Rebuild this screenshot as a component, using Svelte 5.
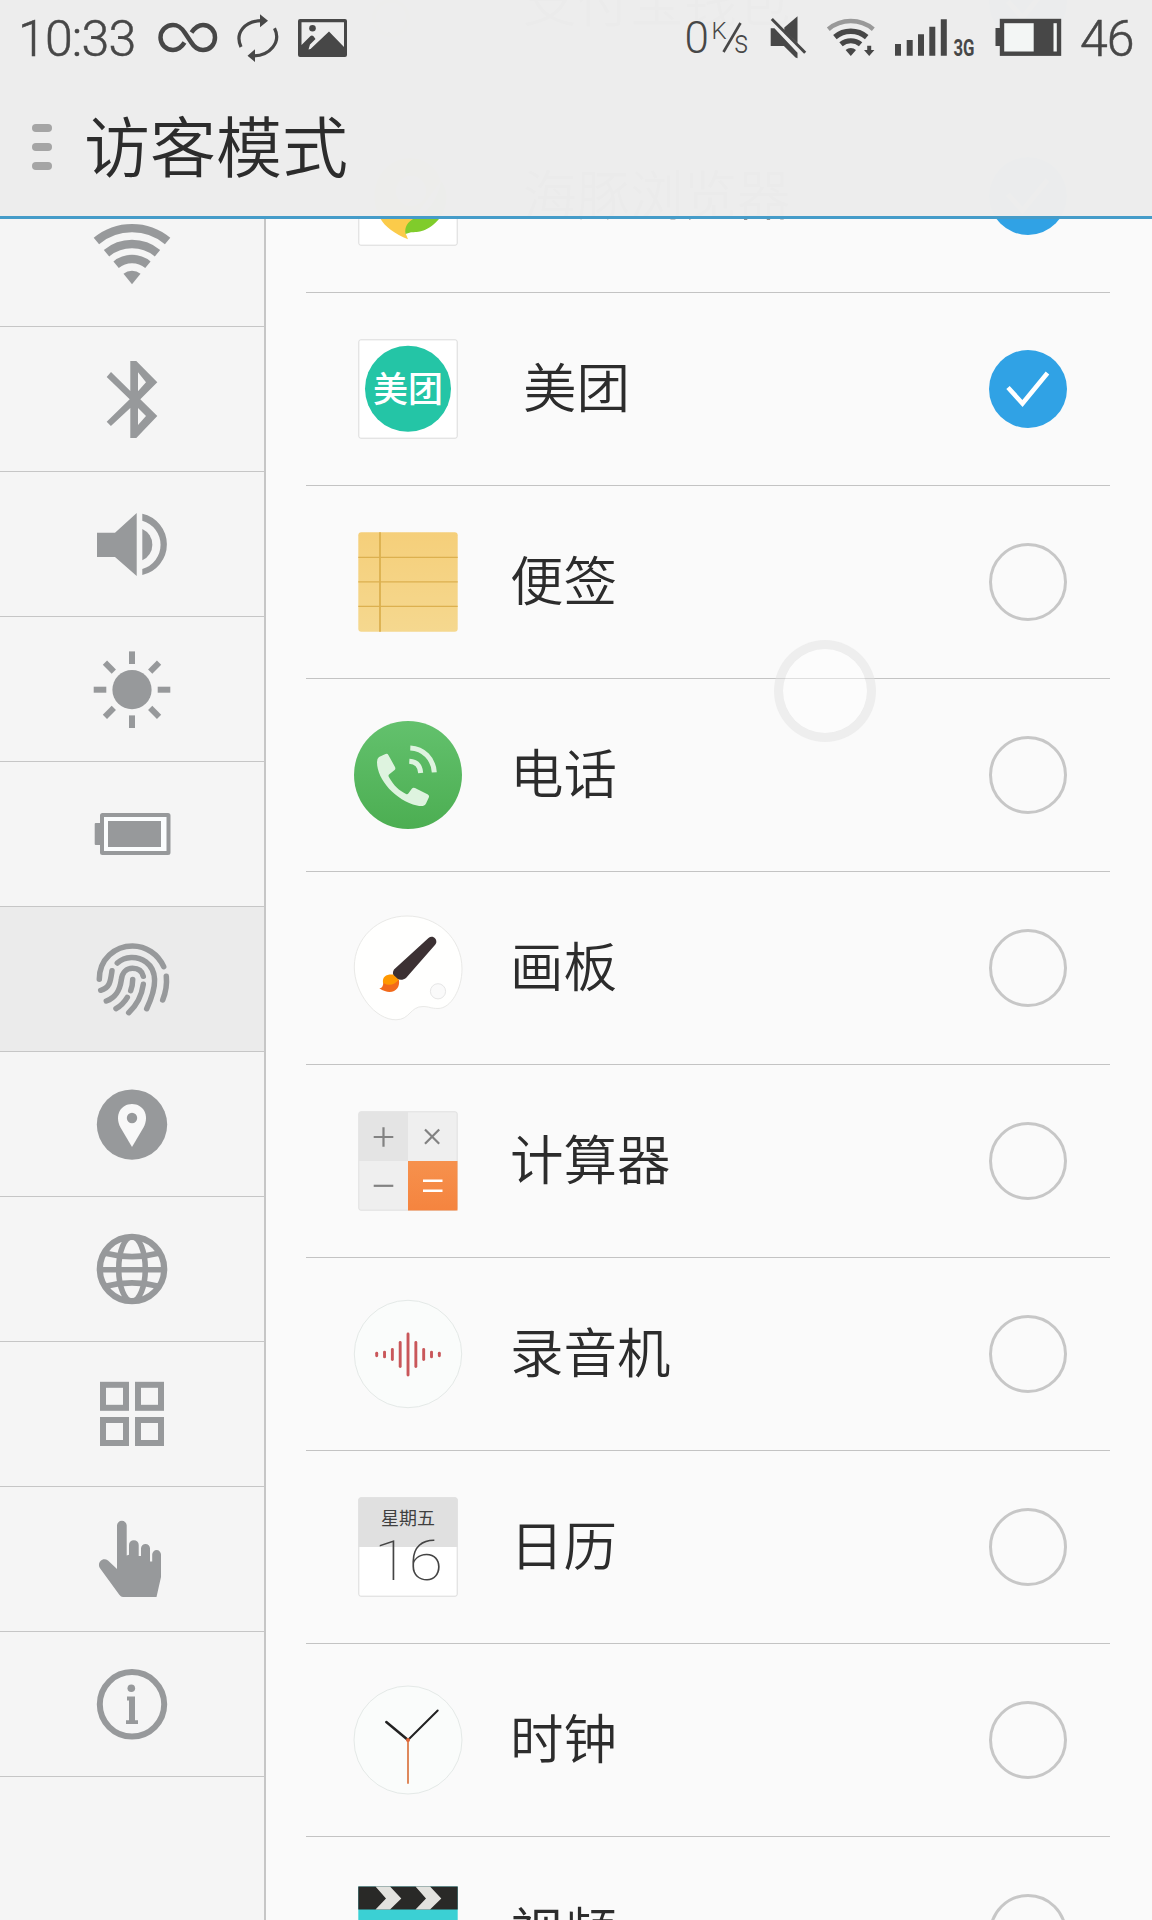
<script lang="ts">
  interface App {
    id: string
    name: string
    checked: boolean
    indent?: boolean
  }

  let apps: App[] = $state([
    { id: 'alipay', name: '支付宝钱包', checked: true, indent: true },
    { id: 'dolphin', name: '海豚浏览器', checked: true, indent: true },
    { id: 'meituan', name: '美团', checked: true, indent: true },
    { id: 'notes', name: '便签', checked: false },
    { id: 'phone', name: '电话', checked: false },
    { id: 'paint', name: '画板', checked: false },
    { id: 'calculator', name: '计算器', checked: false },
    { id: 'recorder', name: '录音机', checked: false },
    { id: 'calendar', name: '日历', checked: false },
    { id: 'clock', name: '时钟', checked: false },
    { id: 'video', name: '视频', checked: false },
  ])

  const sections = [
    'wifi',
    'bluetooth',
    'sound',
    'display',
    'battery',
    'fingerprint',
    'location',
    'globe',
    'apps',
    'gesture',
    'info',
  ]

  let active = $state('fingerprint')

  const rays = [0, 45, 90, 135, 180, 225, 270, 315]

  // half heights of the recorder bars, left to right
  const wave = [1.2, 2.4, 5, 12, 20.5, 12, 5, 2.4, 1.2]
</script>

{#snippet sectionIcon(id: string)}
  <svg class="section-icon" viewBox="0 0 80 80">
    {#if id === 'wifi'}
      <g fill="none" stroke="#97999b" stroke-width="8.4">
        <path d="M4.4 27A55.8 55.8 0 0 1 75.6 27" />
        <path d="M14.5 39.2A40 40 0 0 1 65.5 39.2" />
        <path d="M24.1 50.7A25 25 0 0 1 55.9 50.7" />
      </g>
      <path d="M40 70.3L31.5 59.8A13.3 13.3 0 0 1 48.5 59.8Z" />
    {:else if id === 'bluetooth'}
      <path
        fill-rule="evenodd"
        d="M38.3 2H44.3L65.3 23.3L48.3 40.3L65.3 57L44.3 79H38.3V49L18.9 67L14.7 62.7L37.7 40.3L14.7 18L19 13L38.3 32ZM46 13.3V32.3L54 23.3ZM46 49V66L54 57Z"
      />
    {:else if id === 'sound'}
      <path d="M5 28.7H23L44.7 9V72L23 53H5Z" />
      <path d="M50.3 25A17.2 17.2 0 0 1 50.3 56.3Z" />
      <path d="M50.3 9.7A31.4 31.4 0 0 1 50.3 71V65A25.1 25.1 0 0 0 50.3 16.7Z" />
    {:else if id === 'display'}
      <circle cx="40" cy="40.7" r="19.6" />
      {#each rays as angle}
        <rect x="37" y="2.4" width="6" height="12.6" transform="rotate({angle} 40 40.7)" />
      {/each}
    {:else if id === 'battery'}
      <rect x="2.7" y="29" width="8" height="22" rx="1" />
      <rect x="10" y="21" width="66.5" height="38" rx="0.5" fill="#fbfdfe" stroke="#97999b" stroke-width="4" />
      <rect x="16" y="27" width="53" height="26" />
    {:else if id === 'fingerprint'}
      <g fill="none" stroke="#97999b" stroke-width="5.5" stroke-linecap="round">
        <path d="M7.3 40.3C7.3 20 23 7 40.5 7C54 7 66 15 71.7 27.7" />
        <path d="M74.3 37.3Q75.5 49 70.7 61" />
        <path d="M25.3 24C33 17 45 16.5 54 23C66 32 65 48 54.7 69.7" />
        <path d="M20 31.7C18.5 42 18 49 8.7 51.3" />
        <path d="M14.3 62C25 58 28 50 29.3 41C30 33 35 29.3 40.5 29.3C46 29.3 50 32 51.3 37.3" />
        <path d="M40.7 40.5Q40.7 46 38.7 51.7" />
        <path d="M35.3 58.3Q31 65.5 24 69.7" />
        <path d="M51.3 45.3Q49 62 36.7 73.7" />
      </g>
    {:else if id === 'location'}
      <circle cx="40" cy="40.6" r="35.2" />
      <path fill="#f8f8f8" d="M40 63L28.5 43.5C22 31 29 20 40 20S58 31 51.5 43.5Z" />
      <circle cx="40" cy="34" r="5.2" />
    {:else if id === 'globe'}
      <g fill="none" stroke="#97999b" stroke-width="5.6">
        <circle cx="40" cy="40" r="32.2" stroke-width="6.2" />
        <ellipse cx="40" cy="40" rx="13.3" ry="32.2" />
        <path d="M8 40.7H72" />
        <path d="M13.5 24.2Q40 31 66.5 24.2" />
        <path d="M13.5 57.2Q40 50.6 66.5 57.2" />
      </g>
    {:else if id === 'apps'}
      <g fill="none" stroke="#97999b" stroke-width="6">
        <rect x="11" y="10.8" width="23" height="23" />
        <rect x="46" y="10.8" width="23" height="23" />
        <rect x="11" y="46" width="23" height="23" />
        <rect x="46" y="46" width="23" height="23" />
      </g>
    {:else if id === 'gesture'}
      <path
        d="M25 50V6.6A4.8 4.8 0 0 1 34.7 6.6V36.5L37 35.8V26A4.8 4.8 0 0 1 46.7 26V37H49V29.5A4.5 4.5 0 0 1 58 29.5V42.5H60.2V35.5A4.4 4.4 0 0 1 69 35.5V58L64.5 78H31Q29 78 27.3 75.8L8 49.3C4.5 44 10.5 37.5 16 41.5Z"
      />
    {:else}
      <circle cx="40" cy="40.3" r="32.2" fill="none" stroke="#97999b" stroke-width="6" />
      <circle cx="39.3" cy="24.3" r="3.8" />
      <path d="M35 32.5H43V56.2H46V60H34V56.2H37V36.5H35Z" />
    {/if}
  </svg>
{/snippet}

{#snippet appIcon(id: string)}
  <svg class="app-icon" viewBox="0 0 110 110">
    {#if id === 'alipay'}
      <rect x="5.8" y="5.8" width="98.4" height="98.4" rx="2" fill="#fff" stroke="#dadada" />
      <circle cx="38" cy="70" r="17" fill="none" stroke="#f3c980" stroke-width="4" />
    {:else if id === 'dolphin'}
      <rect x="5.8" y="5.8" width="98.4" height="98.4" rx="2" fill="#fff" stroke="#dadada" />
      <path fill="#fbcb4a" d="M55 98.3C42 93 32 86 27 77C12 50 28 18 56 17C72 17 84 26 88 40L62 76L52.5 92Z" />
      <path fill="#80cc2b" d="M52.5 93C51.5 86 54 81 62 77C74 72 84 60 88 40C98 52 93 70 86 78C75 91 65 91 58 91.3Z" />
      <circle cx="58" cy="50" r="15" fill="#fff" />
    {:else if id === 'meituan'}
      <rect x="5.8" y="5.8" width="98.4" height="98.4" rx="2" fill="#fff" stroke="#dadada" />
      <circle cx="55" cy="54.8" r="43" fill="#24c5a6" />
      <text x="20" y="67.6" font-size="35" font-weight="500" fill="#fff" textLength="70">美团</text>
    {:else if id === 'notes'}
      <defs>
        <linearGradient id="paper" x1="0" y1="0" x2="0" y2="1">
          <stop offset="0" stop-color="#f5cf7a" />
          <stop offset="1" stop-color="#f5d88f" />
        </linearGradient>
      </defs>
      <rect x="5.3" y="5.3" width="99.4" height="99.4" rx="3" fill="url(#paper)" />
      <g stroke="#dcb04f">
        <path d="M5.3 30.4H104.7M5.3 54.9H104.7M5.3 79.4H104.7" stroke-width="1.2" />
        <path d="M27 5.3V104.7" stroke-width="1.8" />
      </g>
    {:else if id === 'phone'}
      <defs>
        <linearGradient id="call" x1="0" y1="0" x2="0" y2="1">
          <stop offset="0" stop-color="#63c16d" />
          <stop offset="1" stop-color="#4cae52" />
        </linearGradient>
      </defs>
      <circle cx="55" cy="55" r="54" fill="url(#call)" />
      <path
        fill="#def3df"
        d="M26 37L32.5 34Q34.5 33.3 35.5 35.2L42 47Q43 49 41.3 50.3L36 54.5Q35 55.6 36 57.3C41 66 46 70.5 53 74Q54.5 74.7 55.3 73.5L58.8 68.7Q60 67 62 68L74.5 74.2Q76.7 75.3 75.8 77.5L73 83.5C71.5 86.5 68 86.5 64 85.5C43 80.5 24 60 24 42Q24 38.5 26 37Z"
      />
      <g fill="none" stroke="#def3df" stroke-width="5">
        <path d="M57.3 28C70.5 28.5 80.5 39 81.3 52.3" />
        <path d="M56.3 41.3Q67 42 67.7 53" />
      </g>
    {:else if id === 'paint'}
      <path
        fill="#fffffe"
        stroke="#e9e9e7"
        d="M54 3C25 3 1.3 25 1.3 54C1.3 80 22 106.8 43 106.8C57 106.8 57 93.5 70 93.5C76 93.5 78 95.5 85 95.5C98 95.5 109 76 109 56C109 25 84 3 54 3Z"
      />
      <circle cx="85" cy="78.3" r="7.6" fill="#fafafa" stroke="#e6e6e6" />
      <path
        fill="#3c3133"
        d="M75.5 25C79 21.8 84 25 83.3 29.5Q83 31 81.5 32.5L53 65C47 70 36.5 63.5 41 56.5Z"
      />
      <path fill="#ff9800" d="M30 70C29 63 34 61 40 61.5L46 67L44 73L34 75Z" />
      <path fill="#f26a1b" d="M26.3 75.3Q30 75.3 30.3 70Q39 75 45.8 66.5C48 76 39 84 26.3 75.3Z" />
    {:else if id === 'calculator'}
      <defs>
        <linearGradient id="equals" x1="0" y1="0" x2="0" y2="1">
          <stop offset="0" stop-color="#f6914d" />
          <stop offset="1" stop-color="#f5843f" />
        </linearGradient>
      </defs>
      <rect x="5.8" y="5.8" width="98.4" height="98.4" rx="2" fill="#efefef" stroke="#dfdfdf" />
      <path fill="#e4e4e4" d="M6 6H55V55H6Z" />
      <path fill="url(#equals)" d="M55 55H104.5V104.5H55Z" />
      <g fill="none" stroke="#828282" stroke-width="2.2">
        <path d="M20.7 31H40.3M30.5 21.2V40.8" />
        <path d="M72 23.5L86.2 37.7M86.2 23.5L72 37.7" />
        <path d="M20.7 79.8H40.3" />
        <path stroke="#fff" stroke-width="2.6" d="M70 74.7H89.5M70 84.7H89.5" />
      </g>
    {:else if id === 'recorder'}
      <circle cx="55" cy="55" r="53.7" fill="#fafcfb" stroke="#e4e9e7" />
      <g stroke="#c9575a" stroke-width="2.9" stroke-linecap="round">
        {#each wave as half, i}
          <path d="M{23.7 + i * 7.83} {55.5 - half}V{55.5 + half}" />
        {/each}
      </g>
    {:else if id === 'calendar'}
      <rect x="5.8" y="5.8" width="98.4" height="98.4" rx="2" fill="#fff" stroke="#dadada" />
      <path fill="#e0e0e0" d="M5.5 8Q5.5 5.5 8 5.5H102Q104.5 5.5 104.5 8V55H5.5Z" />
      <text x="55" y="33" font-size="18" fill="#404040" text-anchor="middle">星期五</text>
      <text class="day" x="21" y="88" font-size="56" fill="#444" textLength="69" lengthAdjust="spacingAndGlyphs">16</text>
    {:else if id === 'clock'}
      <circle cx="55" cy="55" r="54" fill="#fafcfb" stroke="#e4e9e7" />
      <g fill="none" stroke-linecap="round">
        <path stroke="#222" stroke-width="2.5" d="M55 55L33.3 37" />
        <path stroke="#222" stroke-width="2" d="M55 55L84.7 25.5" />
        <path stroke="#dd8354" stroke-width="1.9" d="M55 55V98" />
      </g>
      <circle cx="55" cy="55" r="2" fill="#e0683c" />
    {:else}
      <path fill="#3bd0d4" d="M5.3 8.5H104.7V105H5.3Z" />
      <path fill="#292927" d="M5.3 8.5H104.7V31.4H5.3Z" />
      <g fill="#e2e2de">
        <path d="M22.5 8.5H37L48.3 20.4L37 31.4H22.5L33 20.4Z" />
        <path d="M62.5 8.5H77L88.3 20.4L77 31.4H62.5L73 20.4Z" />
      </g>
    {/if}
  </svg>
{/snippet}

<div class="screen">
  <header class="header">
    <div class="status-bar">
      <span class="clock">10:33</span>
      <svg class="infinity" viewBox="0 0 60 32">
        <path
          d="M26.5 20.5C23 26 19 28 15 28C8 28 2.5 22.5 2.5 15.5C2.5 8.5 8 3 15 3C20 3 23 5 27 11L33 20C36 25 39 28 45 28C52 28 57 22.5 57 15.5C57 8.5 52 3 45 3C40 3 37 5.5 33.5 10.5"
          fill="none"
          stroke="#474747"
          stroke-width="4.5"
        />
      </svg>
      <svg class="sync" viewBox="0 0 44 50">
        <g fill="none" stroke="#474747" stroke-width="3.2">
          <path d="M5 34C-1.5 20 9 7.7 26 7.7" />
          <path d="M38.5 15.3C45.5 29 34 42.8 17 42.8" />
        </g>
        <path d="M24 1.3L32 7.7L24 14.2ZM19 36.3L11.5 42.8L19 49Z" />
      </svg>
      <svg class="picture" viewBox="0 0 49 38">
        <path
          fill-rule="evenodd"
          d="M2 0H47Q49 0 49 2V36Q49 38 47 38H2Q0 38 0 36V2Q0 0 2 0ZM3.5 3.3V26L12.5 17Q14 15.8 15.5 17.3L17.5 20L12 25.5L10.5 30.5L12.5 30L31 12.5L46 28V3.3Z"
        />
        <circle cx="14.5" cy="9.2" r="3.3" />
      </svg>
      <svg class="speed" viewBox="0 0 64 40">
        <text x="-1.5" y="33.5" font-size="44">0</text>
        <text x="25.5" y="20" font-size="24">K</text>
        <text x="48" y="33.5" font-size="34" textLength="14.5" lengthAdjust="spacingAndGlyphs">s</text>
        <path d="M54.5 4L37.5 33" stroke="#474747" stroke-width="2.6" />
      </svg>
      <svg class="mute" viewBox="0 0 37 43">
        <path d="M14.3 11.5L27.5 0.3V27L14.3 14.5Z" />
        <path d="M0.7 12.3H4.4L27.5 36.7V42.3L25.5 41.5L13.9 30H0.7Z" />
        <path d="M1.8 3L35.2 36.7" stroke="#474747" stroke-width="3" />
      </svg>
      <svg class="signal-wifi" viewBox="0 0 49 38">
        <g fill="none" stroke="#474747">
          <path d="M2.3 10.2A35 35 0 0 1 47.3 10.2" stroke="#999" stroke-width="4.5" />
          <path d="M8.9 18.1A24.7 24.7 0 0 1 40.7 18.1" stroke-width="5.4" />
          <path d="M15 25.3A15.3 15.3 0 0 1 34.6 25.3" stroke-width="5.2" />
        </g>
        <path d="M24.8 37L19.6 30.9A8 8 0 0 1 30 30.9ZM41.2 26.7H45.2V31H48.4L43.2 37L38 31H41.2Z" />
      </svg>
      <svg class="signal-cell" viewBox="0 0 80 38">
        <path
          d="M0 25H6V36.7H0ZM11.7 21H17.7V36.7H11.7ZM23 15.3H29V36.7H23ZM34.3 7.7H40.3V36.7H34.3ZM45.8 0.3H51.8V36.7H45.8Z"
        />
        <text class="network" x="58.5" y="36.5" font-size="23" textLength="21" lengthAdjust="spacingAndGlyphs">3G</text>
      </svg>
      <svg class="power" viewBox="0 0 66 37">
        <rect x="7" y="2" width="57" height="32.7" fill="#f3f6f5" stroke="#474747" stroke-width="4.4" />
        <path d="M0.5 9H6V27H0.5ZM38.7 2H58.5V35H38.7Z" />
      </svg>
      <span class="level">46</span>
    </div>
    <div class="title-bar">
      <div class="menu"><i></i><i></i><i></i></div>
      <h1>访客模式</h1>
    </div>
  </header>

  <nav class="sidebar">
    {#each sections as id}
      <button class="section" class:active={active === id} aria-label={id} onclick={() => (active = id)}>
        {@render sectionIcon(id)}
      </button>
    {/each}
  </nav>

  <main class="list">
    {#each apps as app (app.id)}
      <label class="row">
        {@render appIcon(app.id)}
        <span class="name" class:indent={app.indent}>{app.name}</span>
        <input type="checkbox" bind:checked={app.checked} />
        <span class="check">
          {#if app.checked}
            <svg viewBox="0 0 78 78">
              <path d="M19 37.5L33.5 53.5L58.5 23" fill="none" stroke="#fff" stroke-width="4.6" />
            </svg>
          {/if}
        </span>
      </label>
    {/each}
  </main>

  <div class="touch"></div>
</div>

<style>
  :global(body) {
    margin: 0;
    background: #fafafa;
  }

  .screen {
    position: relative;
    display: flex;
    width: 1152px;
    height: 1920px;
    overflow: hidden;
    background: #fafafa;
    color: #2c2c2c;
    font-family: 'Noto Sans CJK SC', sans-serif;
  }

  .header {
    position: absolute;
    top: 0;
    left: 0;
    z-index: 1;
    width: 100%;
    height: 219px;
    box-sizing: border-box;
    border-bottom: 3px solid #459cc9;
    background: rgba(237, 237, 237, 0.991);
    background-clip: padding-box;
  }

  .status-bar {
    display: flex;
    align-items: flex-start;
    height: 76px;
    padding: 0 18px 0 18px;
    box-sizing: border-box;
    color: #474747;
    fill: #474747;
    font-family: Roboto, sans-serif;
    font-weight: 300;
    font-size: 50px;
    line-height: 78px;
    -webkit-text-stroke: 0.5px #474747;
  }

  .status-bar svg {
    flex-shrink: 0;
    overflow: visible;
  }

  .clock {
    width: 140px;
    letter-spacing: -0.8px;
  }

  .infinity {
    width: 60px;
    height: 32px;
    margin-top: 22px;
  }

  .sync {
    width: 44px;
    height: 50px;
    margin: 13px 0 0 18px;
  }

  .picture {
    width: 49px;
    height: 38px;
    margin: 19px 0 0 18px;
  }

  .speed {
    width: 64px;
    height: 40px;
    margin: 19px 0 0 auto;
  }

  .mute {
    width: 37px;
    height: 43px;
    margin: 16px 0 0 20px;
  }

  .signal-wifi {
    width: 49px;
    height: 38px;
    margin: 19px 0 0 19px;
  }

  .signal-cell {
    width: 80px;
    height: 38px;
    margin: 19px 0 0 20px;
  }

  .network {
    font-weight: 700;
  }

  .power {
    width: 66px;
    height: 37px;
    margin: 19px 19px 0 20px;
  }

  .level {
    width: 54px;
    letter-spacing: -1px;
  }

  .title-bar {
    display: flex;
    align-items: center;
    height: 142px;
    padding-left: 32px;
  }

  .menu {
    display: flex;
    flex-direction: column;
    gap: 11px;
    width: 20px;
    margin-right: 32px;
  }

  .menu i {
    height: 8px;
    border-radius: 4px;
    background: #a5a5a5;
  }

  h1 {
    margin: 0;
    padding-bottom: 9px;
    font-size: 66px;
    font-weight: 350;
    line-height: 90px;
  }

  .sidebar {
    flex: 0 0 264px;
    height: 1738px;
    padding-top: 182px;
    border-right: 2px solid #c6c6c6;
    background: #f5f5f5;
  }

  .section {
    display: flex;
    align-items: center;
    justify-content: center;
    width: 100%;
    height: 145px;
    padding: 0;
    border: 0;
    border-bottom: 1px solid #c6c6c6;
    background: none;
  }

  .section.active {
    background: #ebebeb;
  }

  .section-icon {
    width: 80px;
    height: 80px;
    fill: #97999b;
  }

  .list {
    flex: 1;
    margin-top: -93px;
    padding: 0 42px 0 40px;
  }

  .row {
    display: flex;
    align-items: center;
    height: 192px;
    padding: 0 43px 0 47px;
    border-bottom: 1px solid #c3c3c3;
  }

  .app-icon {
    flex: none;
    width: 110px;
    height: 110px;
    margin-right: 47px;
  }

  .day {
    font-family: Roboto, sans-serif;
    font-weight: 100;
  }

  .name {
    flex: 1;
    padding-bottom: 8px;
    font-size: 53.5px;
    font-weight: 350;
    line-height: 80px;
    white-space: nowrap;
  }

  .indent {
    padding-left: 13px;
  }

  input {
    display: none;
  }

  .check {
    flex: none;
    width: 78px;
    height: 78px;
    margin: -1px 0.5px 0 0;
    box-sizing: border-box;
    border: 3px solid #c7c7c7;
    border-radius: 50%;
  }

  input:checked + .check {
    border: 0;
    background: #30a2e5;
  }

  .check svg {
    display: block;
  }

  .touch {
    position: absolute;
    top: 640px;
    left: 774px;
    width: 102px;
    height: 102px;
    box-sizing: border-box;
    border: 9.5px solid rgba(225, 225, 225, 0.5);
    border-radius: 50%;
    background: rgba(255, 255, 255, 0.45);
    background-clip: padding-box;
    pointer-events: none;
  }
</style>
